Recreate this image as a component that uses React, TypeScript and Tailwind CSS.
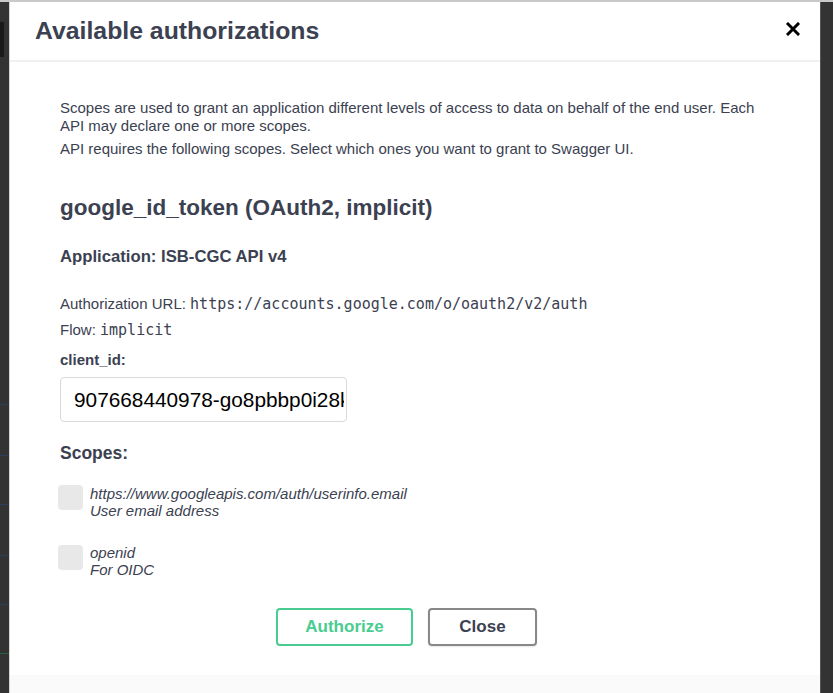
import React from "react";

export default function App() {
  const sans = { fontFamily: '"Liberation Sans", Arial, sans-serif' };
  const mono = { fontFamily: '"DejaVu Sans Mono", "Liberation Mono", monospace' };
  return (
    <div className="w-[833px] h-[693px] overflow-hidden bg-[#333333] border-t-2 border-[#c9c9c9] flex" style={sans}>
      <div className="w-[9px] shrink-0 flex flex-col">
        <div className="h-[20px]" />
        <div className="h-[35px] w-[4px] bg-[#1a1a1a]" />
        <div className="h-[347px]" />
        <div className="h-px bg-[#2a3f5f]" />
        <div className="h-[50px]" />
        <div className="h-px bg-[#2a3f5f]" />
        <div className="h-[48px]" />
        <div className="h-px bg-[#2a3f5f]" />
        <div className="h-[50px]" />
        <div className="h-px bg-[#2a3f5f]" />
        <div className="h-[48px]" />
        <div className="h-px bg-[#2a3f5f]" />
        <div className="h-[48px]" />
        <div className="h-px bg-[#2a5f3f]" />
      </div>
      <div className="w-[811px] shrink-0 bg-white border-l border-[#d5d5d5] flex flex-col text-[#3b4151]">
        <div className="h-[60px] shrink-0 border-b-2 border-[#f0f0f0] flex items-center justify-between pl-[25px] pr-[20px]">
          <h3 className="text-[24.8px] font-bold leading-none">Available authorizations</h3>
          <svg width="14" height="14" viewBox="0 0 14 14" className="-mt-[5px]">
            <path d="M2 2 L12 12 M12 2 L2 12" stroke="#000" strokeWidth="3" strokeLinecap="square" />
          </svg>
        </div>
        <div className="flex-1 flex flex-col pl-[50px] pr-[40px] pt-[37px]">
          <p className="text-[15px] leading-[18px]">
            Scopes are used to grant an application different levels of access to data on behalf of the end user. Each API may declare one or more scopes.
          </p>
          <p className="text-[15px] leading-[18px] mt-[5px]">
            API requires the following scopes. Select which ones you want to grant to Swagger UI.
          </p>
          <h4 className="text-[22.5px] font-bold leading-[26px] mt-[37px]">google_id_token (OAuth2, implicit)</h4>
          <p className="text-[16.7px] font-bold leading-[20px] mt-[26px]">Application: ISB-CGC API v4</p>
          <p className="text-[15px] leading-[18px] mt-[28px]">
            Authorization URL: <span className="text-[15px]" style={mono}>https://accounts.google.com/o/oauth2/v2/auth</span>
          </p>
          <p className="text-[15px] leading-[18px] mt-[8px]">
            Flow: <span className="text-[15px]" style={mono}>implicit</span>
          </p>
          <label className="text-[15px] font-bold leading-[18px] mt-[12px]">client_id:</label>
          <div className="mt-[8px] w-[287px] h-[45px] shrink-0 border border-[#d9d9d9] rounded-[4px] flex items-center pl-[13px] pr-[2px] overflow-hidden whitespace-nowrap">
            <span className="text-[20.8px] text-black overflow-hidden">907668440978-go8pbbp0i28k3u</span>
          </div>
          <p className="text-[17.5px] font-bold leading-[20px] mt-[21px]">Scopes:</p>
          <div className="flex mt-[22px] -ml-[2px]">
            <div className="w-[25px] h-[25px] rounded-[4px] bg-[#e8e8e8] shrink-0" />
            <div className="ml-[7px] text-[15px] italic leading-[17px]">
              <div>https://www.googleapis.com/auth/userinfo.email</div>
              <div>User email address</div>
            </div>
          </div>
          <div className="flex mt-[25px] -ml-[2px]">
            <div className="w-[25px] h-[25px] rounded-[4px] bg-[#e8e8e8] shrink-0 mt-[1px]" />
            <div className="ml-[7px] text-[15px] italic leading-[17px]">
              <div>openid</div>
              <div>For OIDC</div>
            </div>
          </div>
          <div className="flex justify-center gap-[15px] mt-[30px] pr-[27px]">
            <button className="w-[137px] h-[38px] border-2 border-[#49cc90] rounded-[4px] text-[#49cc90] text-[17px] font-bold" style={sans}>Authorize</button>
            <button className="w-[109px] h-[38px] border-2 border-[#888888] rounded-[4px] text-[#3b4151] text-[17px] font-bold shadow-[0_1px_2px_rgba(0,0,0,0.1)]" style={sans}>Close</button>
          </div>
          <div className="flex-1" />
        </div>
        <div className="h-[18px] bg-[#fafafa] -mt-[18px]" />
      </div>
      <div className="flex-1 border-l border-[#555]" />
    </div>
  );
}
